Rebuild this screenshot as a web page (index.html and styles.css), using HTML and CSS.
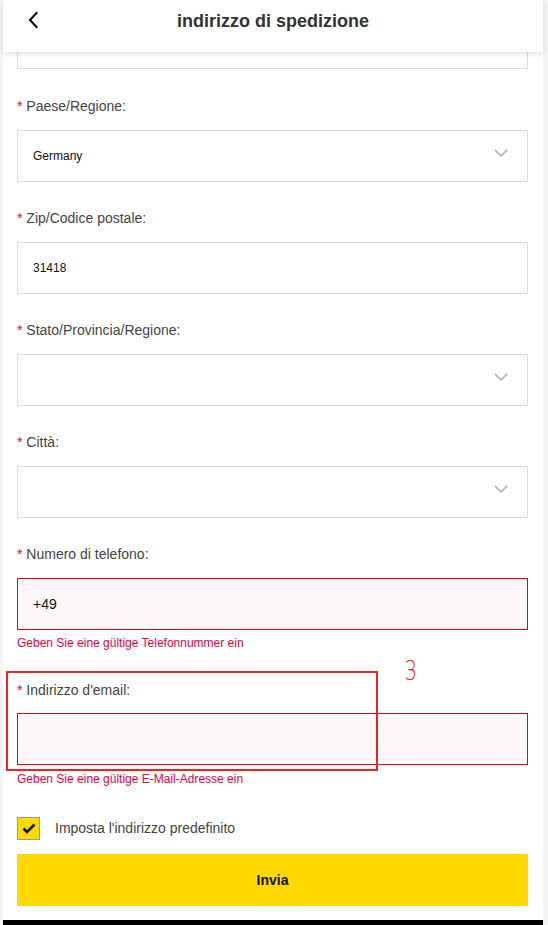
FILE: index.html
```html
<!DOCTYPE html>
<html lang="it">
<head>
<meta charset="utf-8">
<title>indirizzo di spedizione</title>
<link rel="stylesheet" href="styles.css">
</head>
<body>
<div class="page">
  <header class="topbar">
    <span class="back">
      <svg width="12" height="18" viewBox="0 0 12 18"><path d="M9.5 2 L3 9 L9.5 16" fill="none" stroke="#111" stroke-width="2.2" stroke-linecap="square"/></svg>
    </span>
    <h1 class="title">indirizzo di spedizione</h1>
  </header>
  <main class="form">
    <div class="box box-cut"></div>

    <div class="field field-first">
      <label class="label"><span class="req">*</span> Paese/Regione:</label>
      <div class="box select"><span class="value">Germany</span><svg class="chev" width="14" height="8" viewBox="0 0 14 8"><path d="M1 1 L7 7 L13 1" fill="none" stroke="#999" stroke-width="1.1"/></svg></div>
    </div>

    <div class="field">
      <label class="label"><span class="req">*</span> Zip/Codice postale:</label>
      <div class="box"><span class="value">31418</span></div>
    </div>

    <div class="field">
      <label class="label"><span class="req">*</span> Stato/Provincia/Regione:</label>
      <div class="box select"><span class="value"></span><svg class="chev" width="14" height="8" viewBox="0 0 14 8"><path d="M1 1 L7 7 L13 1" fill="none" stroke="#999" stroke-width="1.1"/></svg></div>
    </div>

    <div class="field">
      <label class="label"><span class="req">*</span> Città:</label>
      <div class="box select"><span class="value"></span><svg class="chev" width="14" height="8" viewBox="0 0 14 8"><path d="M1 1 L7 7 L13 1" fill="none" stroke="#999" stroke-width="1.1"/></svg></div>
    </div>

    <div class="field">
      <label class="label"><span class="req">*</span> Numero di telefono:</label>
      <div class="box error"><span class="value big">+49</span></div>
      <p class="err">Geben Sie eine gültige Telefonnummer ein</p>
    </div>

    <div class="field field-email">
      <label class="label"><span class="req">*</span> Indirizzo d'email:</label>
      <div class="box error"><span class="value big"></span></div>
      <p class="err">Geben Sie eine gültige E-Mail-Adresse ein</p>
      <div class="annot"></div>
      <span class="annot-num">3</span>
    </div>

    <div class="check-row">
      <span class="checkbox"><svg width="14" height="11" viewBox="0 0 14 11"><path d="M1.5 5.5 L5 9 L12.5 1.5" fill="none" stroke="#111" stroke-width="2.6"/></svg></span>
      <span class="check-label">Imposta l'indirizzo predefinito</span>
    </div>

    <button class="submit">Invia</button>
  </main>
  <div class="bottombar"></div>
</div>
</body>
</html>
```
FILE: styles.css
```css
* { box-sizing: border-box; }
html, body { margin: 0; padding: 0; }
body {
  background: #f4f4f4;
  font-family: "Liberation Sans", Arial, sans-serif;
  color: #333;
}
.page {
  width: 540px;
  margin-left: 3px;
  background: #fff;
  height: 925px;
  display: flex;
  flex-direction: column;
}
.topbar {
  position: relative;
  z-index: 2;
  height: 52px;
  background: #fff;
  box-shadow: 0 2px 6px rgba(0,0,0,0.12);
  display: flex;
  align-items: center;
  justify-content: center;
}
.back {
  position: absolute;
  left: 24px;
  top: 11px;
  display: flex;
}
.title {
  margin: 0;
  font-size: 18px;
  font-weight: bold;
  color: #333;
  line-height: 22px;
  margin-top: -11px;
}
.form {
  padding: 0 15px 0 14px;
  flex: 1;
}
.box {
  height: 52px;
  border: 1px solid #ddd;
  display: flex;
  align-items: center;
  padding: 0 15px;
  position: relative;
}
.box-cut {
  height: 17px;
  border-top: none;
}
.field {
  padding-top: 26px;
  position: relative;
}
.field-first { padding-top: 27px; }
.label {
  display: block;
  font-size: 14px;
  line-height: 20px;
  color: #444;
  margin-bottom: 14px;
}
.req { color: #e4002b; }
.value {
  font-size: 12px;
  color: #111;
}
.value.big { font-size: 14px; }
.select { justify-content: space-between; }
.chev { margin-right: 4px; margin-top: -6px; }
.error {
  border-color: #e60012;
  background: #fdf7f7;
}
.err {
  margin: 5px 0 0;
  font-size: 12px;
  line-height: 16px;
  color: #e4003a;
}
.field-email { padding-top: 29px; }
.field-email .label { margin-bottom: 13px; }
.field-email .err { margin-top: 6px; }
.annot {
  position: absolute;
  left: -11px;
  top: 20px;
  width: 372px;
  height: 100px;
  border: 2px solid #ee2222;
}
.annot-num {
  position: absolute;
  left: 385px;
  top: 4px;
  font-size: 27px;
  color: #ee2222;
  font-family: "DejaVu Sans", sans-serif;
  font-weight: 200;
  transform: scaleX(0.75);
}
.check-row {
  display: flex;
  align-items: center;
  margin-top: 29px;
  height: 24px;
}
.checkbox {
  width: 23px;
  height: 23px;
  background: #ffd900;
  border: 1px solid #999;
  display: flex;
  align-items: center;
  justify-content: center;
}
.check-label {
  margin-left: 15px;
  font-size: 14px;
  color: #444;
}
.submit {
  display: block;
  width: 100%;
  margin-top: 14px;
  height: 52px;
  background: #ffd900;
  border: none;
  font-family: "Liberation Sans", Arial, sans-serif;
  font-weight: bold;
  font-size: 14px;
  color: #111;
}
.bottombar {
  height: 5px;
  background: #000;
  margin-top: auto;
}
```
